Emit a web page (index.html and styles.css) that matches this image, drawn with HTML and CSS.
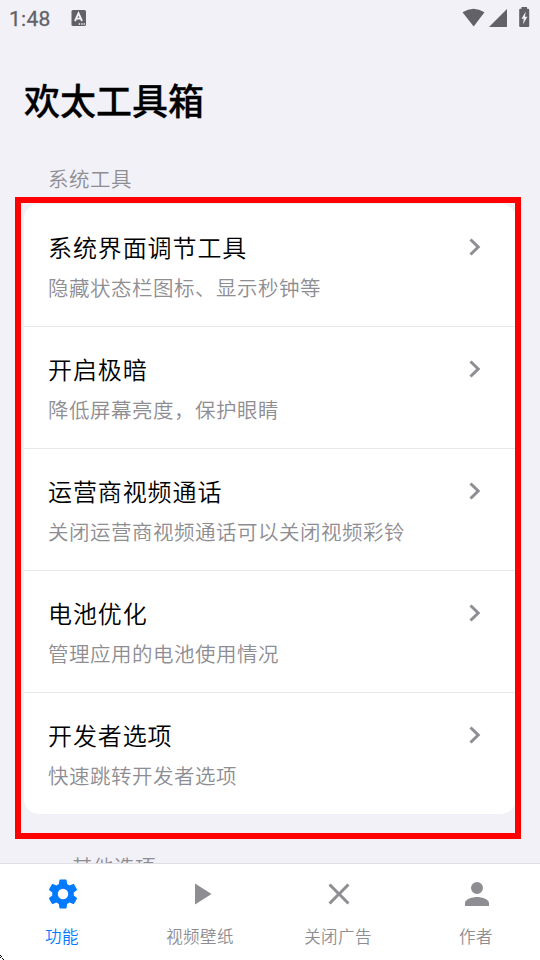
FILE: index.html
```html
<!DOCTYPE html>
<html lang="zh-CN">
<head>
<meta charset="utf-8">
<title>欢太工具箱</title>
<link rel="stylesheet" href="styles.css">
</head>
<body>
<header class="status">
  <span class="clock">1:48</span>
  <svg class="ime" viewBox="0 0 16 16"><rect x="0.5" width="14.5" height="16" rx="1.500" fill="#626266"/><path d="M4 11 7.500 3.300 11 11M5.200 8.600h4.600" fill="none" stroke="#f2f1f7" stroke-width="1.900"/><path d="M7.700 14h1.400M10.200 14h1.400M12.600 14H14" stroke="#f2f1f7" stroke-width="1.400"/></svg>
  <svg class="signals" viewBox="0 0 70 22"><g fill="#626266"><path d="M.5 5.200Q11.500-1.800 22.500 5.200L11.700 19.500Z"/><path d="M45 2v18H27Z"/><path d="M59.500 0h5.500v1.700h1.200q1 0 1 1V19q0 1-1 1h-8q-1 0-1-1V2.700q0-1 1-1h1.300Z"/></g><path d="m63.800 4.500-4.300 7.300h2.300l-.8 5.500 4.400-7.500h-2.500Z" fill="#f2f1f7"/></svg>
</header>
<main class="page">
  <h1 class="heading">欢太工具箱</h1>
  <h2 class="category">系统工具</h2>
  <section class="card">
    <a class="row"><div><p class="name">系统界面调节工具</p><p class="desc">隐藏状态栏图标、显示秒钟等</p></div><svg class="chevron" viewBox="0 0 12 18"><path d="m1.500 1.500 7.700 7.500-7.700 7.500"/></svg></a>
    <a class="row"><div><p class="name">开启极暗</p><p class="desc">降低屏幕亮度，保护眼睛</p></div><svg class="chevron" viewBox="0 0 12 18"><path d="m1.500 1.500 7.700 7.500-7.700 7.500"/></svg></a>
    <a class="row"><div><p class="name">运营商视频通话</p><p class="desc">关闭运营商视频通话可以关闭视频彩铃</p></div><svg class="chevron" viewBox="0 0 12 18"><path d="m1.500 1.500 7.700 7.500-7.700 7.500"/></svg></a>
    <a class="row"><div><p class="name">电池优化</p><p class="desc">管理应用的电池使用情况</p></div><svg class="chevron" viewBox="0 0 12 18"><path d="m1.500 1.500 7.700 7.500-7.700 7.500"/></svg></a>
    <a class="row"><div><p class="name">开发者选项</p><p class="desc">快速跳转开发者选项</p></div><svg class="chevron" viewBox="0 0 12 18"><path d="m1.500 1.500 7.700 7.500-7.700 7.500"/></svg></a>
    <div class="highlight"></div>
  </section>
  <h2 class="category next">其他选项</h2>
</main>
<nav class="tabs">
  <a class="tab active"><svg viewBox="0 0 24 24"><path d="M19.140 12.940c.04-.3.06-.61.06-.94 0-.32-.02-.64-.07-.94l2.030-1.580c.18-.14.23-.41.12-.61l-1.920-3.320c-.12-.22-.37-.29-.59-.22l-2.390.96c-.5-.38-1.030-.7-1.620-.94l-.36-2.540c-.04-.24-.24-.41-.48-.41h-3.840c-.24 0-.43.17-.47.41l-.36 2.540c-.59.24-1.130.57-1.620.94l-2.390-.96c-.22-.08-.47 0-.59.22L2.740 8.870c-.12.21-.08.47.12.61l2.030 1.580c-.05.3-.09.63-.09.94s.02.64.07.94l-2.030 1.580c-.18.14-.23.41-.12.61l1.920 3.320c.12.22.37.29.59.22l2.390-.96c.5.38 1.030.7 1.620.94l.36 2.540c.05.24.24.41.48.41h3.840c.24 0 .44-.17.47-.41l.36-2.540c.59-.24 1.130-.56 1.620-.94l2.390.96c.22.08.47 0 .59-.22l1.920-3.320c.12-.22.07-.47-.12-.61l-2.010-1.580ZM12 15.500a3.500 3.500 0 1 1 0-7 3.500 3.500 0 0 1 0 7Z"/></svg><span>功能</span></a>
  <a class="tab"><svg viewBox="0 0 24 24"><path d="M8 5v14l11-7Z"/></svg><span>视频壁纸</span></a>
  <a class="tab"><svg viewBox="0 0 24 24"><path d="M19 6.410 17.590 5 12 10.590 6.410 5 5 6.410 10.590 12 5 17.590 6.410 19 12 13.410 17.590 19 19 17.590 13.410 12Z"/></svg><span>关闭广告</span></a>
  <a class="tab"><svg viewBox="0 0 24 24"><path d="M12 12a4 4 0 1 0 0-8 4 4 0 0 0 0 8Zm0 2c-2.670 0-8 1.340-8 4v2h16v-2c0-2.660-5.330-4-8-4Z"/></svg><span>作者</span></a>
  <svg class="speck" viewBox="0 0 4 5"><path d="M0 0h1v1H0zM1 1h1v1H1zM0 2h1v1H0zM2 3h1v1H2zM3 4h1v1H3z"/></svg>
</nav>
</body>
</html>
```
FILE: styles.css
```css
* { box-sizing: border-box; }
body {
  margin: 0;
  width: 540px;
  height: 960px;
  display: flex;
  flex-direction: column;
  overflow: hidden;
  background: #f2f1f7;
  font-family: "Noto Sans CJK SC", sans-serif;
  font-weight: 350;
}
h1, h2, p { margin: 0; }
.status {
  height: 36px;
  flex: none;
  display: flex;
  align-items: center;
  padding: 0 8px 0 9px;
  color: #626266;
}
.clock { width: 62px; font: 400 21px/36px Roboto, sans-serif; letter-spacing: 0.3px; padding-top: 2px; -webkit-text-stroke: 0.3px; }
.ime { width: 16px; height: 16px; }
.signals { width: 70px; height: 22px; margin-left: auto; }
.page { flex: 1; min-height: 0; overflow: hidden; padding: 0 24px; }
.heading { margin-top: 36px; font-size: 36px; line-height: 54px; font-weight: 500; -webkit-text-stroke: 0.3px; }
.category {
  padding: 35px 0 0 24px;
  height: 78px;
  font-size: 20.5px;
  line-height: 34px;
  font-weight: 350;
  letter-spacing: 0.5px;
  color: #8e8d92;
}
.card { position: relative; height: 610px; border-radius: 15px; background: #fff; }
.row {
  display: flex;
  justify-content: space-between;
  height: 122px;
  padding: 24px 35px 0 24px;
  border-top: 1px solid #e8e8ea;
}
.row:first-child { border-top-color: transparent; }
.name { font-size: 24px; line-height: 36px; letter-spacing: 0.9px; color: #000; }
.desc { margin-top: 5px; font-size: 20.5px; line-height: 34px; letter-spacing: 0.5px; color: #8e8d92; }
.chevron { width: 12px; height: 18px; margin-top: 9px; fill: none; stroke: #8e8d92; stroke-width: 3; }
.highlight { position: absolute; left: -9px; top: -7px; width: 506px; height: 642px; border: 6px solid #f00; }
.category.next { padding-left: 48px; }
.tabs {
  position: relative;
  flex: none;
  height: 97px;
  display: grid;
  grid-template-columns: repeat(4, 138px);
  padding-top: 12px;
  border-top: 1px solid #dfdee3;
  background: #fff;
  margin-left: -6px;
}
.tab { display: flex; flex-direction: column; align-items: center; color: #8e8d92; font-size: 16.500px; line-height: 26px; letter-spacing: 0.4px; }
.tab span { margin-right: 2px; }
.tab svg { width: 36px; height: 36px; fill: currentColor; margin-bottom: 11px; }
.tab.active { color: #007aff; }
.speck { position: absolute; left: 6px; bottom: 0; width: 4px; height: 5px; }
```
